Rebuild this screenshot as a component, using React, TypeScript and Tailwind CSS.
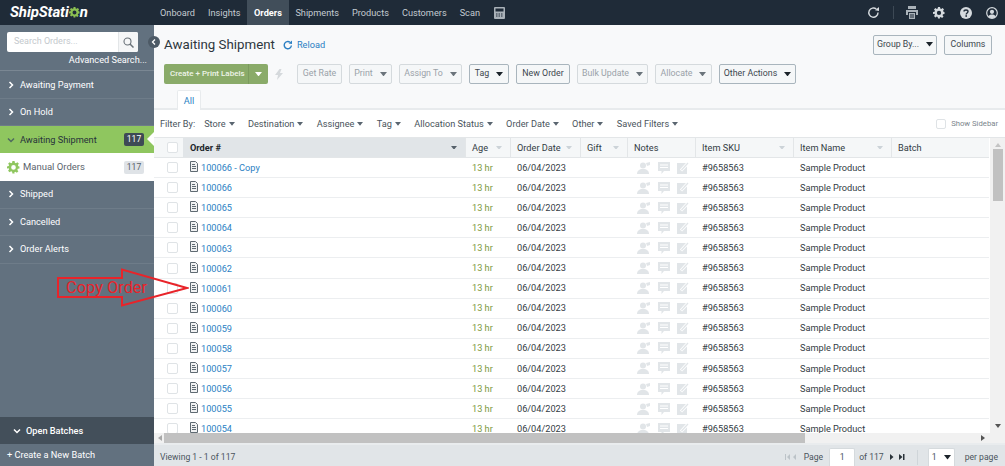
import React from "react";

const Caret = ({ c = "#5a6570", s = 8 }: { c?: string; s?: number }) => (
  <svg width={s} height={s * 0.625} viewBox="0 0 8 5" className="inline-block shrink-0"><path d="M0 0h8L4 5z" fill={c} /></svg>
);

const Chevron = ({ down, c = "#fff" }: { down?: boolean; c?: string }) => (
  <svg width="8" height="8" viewBox="0 0 8 8" className="shrink-0">
    <path d={down ? "M1 2.5l3 3 3-3" : "M2.5 1l3 3-3 3"} fill="none" stroke={c} strokeWidth="1.5" />
  </svg>
);

const Gear = ({ size, c }: { size: number; c: string }) => (
  <svg width={size} height={size} viewBox="0 0 24 24" className="shrink-0">
    <path fill={c} fillRule="evenodd" d="M10 1h4l.6 3.2 1.9.8 2.7-1.9 2.8 2.8-1.9 2.7.8 1.9L23 11v4l-3.1.5-.8 1.9 1.9 2.7-2.8 2.8-2.7-1.9-1.9.8L14 24h-4l-.6-3.2-1.9-.8-2.7 1.9-2.8-2.8 1.9-2.7-.8-1.9L0 15v-4l3.1-.6.8-1.9L2 5.9l2.8-2.8 2.7 1.9 1.9-.8zM12 8.5a4.3 4.3 0 100 8.6 4.3 4.3 0 000-8.6z" transform="translate(0 -1)" />
  </svg>
);

const DocIcon = () => (
  <svg width="8" height="11" viewBox="0 0 8 11" className="mt-[-2px] shrink-0">
    <path d="M.5.5h5l2 2v8h-7z" fill="#f1f2f3" stroke="#5f6a72" />
    <path d="M2 3.5h3M2 5.5h4M2 7.5h4" stroke="#5f6a72" />
  </svg>
);

const NoteIcons = () => (
  <div className="flex items-center gap-[7px] pl-[10px]">
    <svg width="14" height="12" viewBox="0 0 14 12">
      <circle cx="6" cy="3.5" r="3" fill="#e1e5e8" />
      <path d="M0 12c0-3 2-5 6-5s6 2 6 5z" fill="#e1e5e8" />
      <path d="M9 1l4-1v3l-3 1z" fill="#e1e5e8" />
    </svg>
    <svg width="12" height="12" viewBox="0 0 12 12">
      <path d="M0 0h12v9H6l-2.5 3V9H0z" fill="#e1e5e8" />
      <path d="M2 3h8M2 5.5h8" stroke="#fff" />
    </svg>
    <svg width="12" height="12" viewBox="0 0 12 12">
      <rect x="0" y="1" width="10" height="11" fill="#e1e5e8" />
      <path d="M4 8.5L11 1" stroke="#fff" strokeWidth="3" />
      <path d="M4.5 8L11 1" stroke="#e1e5e8" strokeWidth="1.3" />
    </svg>
  </div>
);

const Box = ({ size = 11 }: { size?: number }) => (
  <span className="block rounded-[2px] border border-[#dfe3e6] bg-white" style={{ width: size, height: size }} />
);

const Btn = ({ label, active, caret, w }: { label: string; active?: boolean; caret?: boolean; w: string }) => (
  <div
    className={`flex h-[20px] items-center justify-center gap-[7px] whitespace-nowrap rounded-[2px] border text-[8.8px] ${w} ${
      active ? "border-[#a9b5bd] bg-[#f5f7f8] text-[#3c464e]" : "border-[#d5dadd] bg-[#f5f7f8] text-[#9aa2a8]"
    }`}
  >
    <span>{label}</span>
    {caret && <Caret c={active ? "#1b232a" : "#6b747b"} s={7} />}
  </div>
);

const SideItem = ({ label, h = "h-[27.5px]" }: { label: string; h?: string }) => (
  <div className={`flex ${h} items-center gap-[5px] border-b border-[#6e7c89] pl-[7px] text-[9.2px] text-white`}>
    <Chevron />
    <span>{label}</span>
  </div>
);

const cols = "grid-cols-[29px_282px_45px_70px_47px_68px_98px_98px_98px]";

const orders = [
  "100066 - Copy", "100066", "100065", "100064", "100063", "100062", "100061", "100060",
  "100059", "100058", "100057", "100056", "100055", "100054",
];

const headers: [string, boolean][] = [
  ["Age", true], ["Order Date", true], ["Gift", true], ["Notes", false],
  ["Item SKU", true], ["Item Name", true], ["Batch", false],
];

const filters = ["Store", "Destination", "Assignee", "Tag", "Allocation Status", "Order Date", "Other", "Saved Filters"];

export default function App() {
  return (
    <div className="relative flex h-[466px] w-[1005px] flex-col overflow-hidden bg-white font-['Roboto',sans-serif] text-[#333c44]">
      {/* top bar */}
      <header className="flex h-[25px] shrink-0 items-center bg-[#1f2b38] text-[9.2px] text-[#c3cad0]">
        <div className="flex w-[153.5px] items-center pl-[10px] text-[15px] font-bold italic leading-none tracking-[-0.1px] text-white">
          <span>ShipStati</span>
          <Gear size={11} c="#8cc152" />
          <span>n</span>
        </div>
        <nav className="flex h-full items-center">
          <span className="px-[6.5px]">Onboard</span>
          <span className="px-[6.5px]">Insights</span>
          <span className="flex h-full items-center bg-[#414e5a] px-[7px] font-bold text-white">Orders</span>
          <span className="px-[6.5px]">Shipments</span>
          <span className="px-[6.5px]">Products</span>
          <span className="px-[6.5px]">Customers</span>
          <span className="px-[6.5px]">Scan</span>
          <svg width="11" height="12" viewBox="0 0 11 12" className="ml-[7px]">
            <rect width="11" height="12" rx="1" fill="#aab2b9" />
            <rect x="1.5" y="1.5" width="8" height="3" fill="#1f2b38" />
            <path d="M2 7h7M2 9h7" stroke="#1f2b38" strokeDasharray="1.5 1" />
          </svg>
        </nav>
        <div className="ml-auto flex items-center pr-[7px]">
          <svg width="13" height="13" viewBox="0 0 13 13" className="mr-[13px]">
            <path d="M11 6.5A4.6 4.6 0 1 1 9.3 3" fill="none" stroke="#d5dade" strokeWidth="1.4" />
            <path d="M8 4.2L12 5V1z" fill="#d5dade" />
          </svg>
          <span className="mr-[12px] h-[13px] w-px bg-[#3d4955]" />
          <svg width="12" height="13" viewBox="0 0 12 13" className="mr-[15px]">
            <path d="M2 0h8v3H2zM0 4h12v5h-2V6H2v3H0z" fill="#aab2b9" />
            <path d="M3 7h6v6H3z" fill="#aab2b9" />
            <path d="M4 9h4M4 11h4" stroke="#1f2b38" />
          </svg>
          <span className="mr-[15px]"><Gear size={12} c="#d5dade" /></span>
          <svg width="12" height="12" viewBox="0 0 12 12" className="mr-[14px]">
            <circle cx="6" cy="6" r="6" fill="#d5dade" />
            <path d="M4 4.6C4 3.5 5 3 6 3s2 .6 2 1.6C8 6 6.2 6 6.2 7.4" fill="none" stroke="#1f2b38" strokeWidth="1.4" />
            <rect x="5.4" y="8.2" width="1.6" height="1.6" fill="#1f2b38" />
          </svg>
          <svg width="12" height="12" viewBox="0 0 12 12">
            <circle cx="6" cy="6" r="5.3" fill="none" stroke="#d5dade" strokeWidth="1.2" />
            <circle cx="6" cy="4.8" r="2.1" fill="#d5dade" />
            <path d="M2.4 9.5C3 7.9 4.4 7.4 6 7.4s3 .5 3.6 2.1C8.6 10.6 7.4 11 6 11s-2.6-.4-3.6-1.5z" fill="#d5dade" />
          </svg>
        </div>
      </header>

      <div className="flex min-h-0 flex-1">
        {/* sidebar */}
        <aside className="relative flex w-[154px] shrink-0 flex-col bg-[#62717f]">
          <div className="h-[46px] border-b border-[#7a8793] pl-[7px] pr-[7px] pt-[7px]">
            <div className="flex h-[20px] w-[131px] items-center rounded-[2px] bg-white">
              <span className="flex-1 pl-[7px] text-[9px] text-[#c4c9cd]">Search Orders...</span>
              <span className="flex h-full w-[20px] items-center justify-center rounded-r-[2px] border-l border-[#e3e6e8] bg-[#f5f6f7]">
                <svg width="11" height="11" viewBox="0 0 11 11">
                  <circle cx="4.5" cy="4.5" r="3.5" fill="none" stroke="#6a7279" strokeWidth="1.1" />
                  <path d="M7 7l3.5 3.5" stroke="#6a7279" strokeWidth="1.5" />
                </svg>
              </span>
            </div>
            <div className="text-right text-[9.2px] leading-[16px] text-white">Advanced Search...</div>
          </div>
          <div className="h-[1px]" />
          <SideItem label="Awaiting Payment" h="h-[27px]" />
          <SideItem label="On Hold" h="h-[27px]" />
          <div className="relative flex h-[27px] items-center bg-[#8fc65f] pl-[7px] text-[9.2px] text-[#27323b]">
            <Chevron down c="#4f6a5f" />
            <span className="ml-[5px]">Awaiting Shipment</span>
            <span className="ml-auto mr-[10px] flex h-[13px] w-[20px] items-center justify-center rounded-[2px] bg-[#3e4a55] text-[8.5px] text-white">117</span>
            <span className="absolute right-0 top-[6px] h-0 w-0 border-y-[7px] border-r-[7px] border-y-transparent border-r-white" />
          </div>
          <div className="flex h-[28px] items-center bg-white pl-[7px] text-[9.5px] text-[#5a646c]">
            <Gear size={13} c="#8fc65f" />
            <span className="ml-[3px]">Manual Orders</span>
            <span className="ml-auto mr-[10px] flex h-[13px] w-[20px] items-center justify-center rounded-[2px] bg-[#dfe3e7] text-[8.5px] text-[#56616a]">117</span>
          </div>
          <SideItem label="Shipped" />
          <SideItem label="Cancelled" />
          <SideItem label="Order Alerts" />
          <div className="flex-1" />
          <div className="flex h-[27px] items-center bg-[#434f5a] pl-[13px] text-[9.2px] font-medium text-white">
            <Chevron down />
            <span className="ml-[5px]">Open Batches</span>
          </div>
          <div className="flex h-[22px] items-center pl-[7px] text-[9.2px] text-white">+ Create a New Batch</div>
          <span className="absolute right-[-6px] top-[11px] z-10 flex h-[12px] w-[12px] items-center justify-center rounded-full bg-[#4d5a66]">
            <svg width="6" height="6" viewBox="0 0 6 6"><path d="M4 .5L1.5 3 4 5.5" fill="none" stroke="#fff" strokeWidth="1.3" /></svg>
          </span>
        </aside>

        {/* main */}
        <main className="flex min-w-0 flex-1 flex-col">
          <section className="h-[85px] shrink-0 border-b-[2px] border-[#e8ebed] bg-[#f8f9fa] pl-[10px]">
            <div className="flex h-[39px] items-center">
              <h1 className="mt-[1px] text-[13.3px] leading-none text-[#2d363d]">Awaiting Shipment</h1>
              <svg width="10" height="10" viewBox="0 0 10 10" className="ml-[8px] mt-[1px]">
                <path d="M8.4 5.5A3.6 3.6 0 1 1 7 2.3" fill="none" stroke="#2b7fc3" strokeWidth="1.4" />
                <path d="M5.6 3.4L9 4V.6z" fill="#2b7fc3" />
              </svg>
              <span className="ml-[4px] text-[9.2px] text-[#2b7fc3]">Reload</span>
              <div className="ml-auto mr-[13px] flex gap-[7px]">
                <Btn label="Group By..." active caret w="w-[64px]" />
                <Btn label="Columns" active w="w-[48px]" />
              </div>
            </div>
            <div className="flex items-center">
              <div className="flex h-[20px] w-[104px] items-center whitespace-nowrap rounded-[2px] bg-[#8aab69] text-[8px] font-medium text-[#eef4e8]">
                <span className="w-[85px] border-r border-[#7c9b5e] pl-[6px] leading-[20px]">Create + Print Labels</span>
                <span className="flex flex-1 justify-center"><Caret c="#fff" s={7} /></span>
              </div>
              <svg width="8" height="11" viewBox="0 0 8 11" className="ml-[7px] mr-[14px]"><path d="M4.5 0L0 6h3l-1 5 6-7H5l1.5-4z" fill="#d5d9dc" /></svg>
              <div className="flex gap-[7px]">
                <Btn label="Get Rate" w="w-[45px]" />
                <Btn label="Print" caret w="w-[43px]" />
                <Btn label="Assign To" caret w="w-[63px]" />
                <Btn label="Tag" active caret w="w-[40px]" />
                <Btn label="New Order" active w="w-[54px]" />
                <Btn label="Bulk Update" caret w="w-[71px]" />
                <Btn label="Allocate" caret w="w-[57px]" />
                <Btn label="Other Actions" active caret w="w-[77px]" />
              </div>
            </div>
          </section>
          <div className="relative h-0">
            <span className="absolute left-[23px] top-[-20px] flex h-[20px] w-[24px] items-center justify-center rounded-t-[2px] border border-b-0 border-[#e8ebed] bg-white text-[9.2px] text-[#2b7fc3]">All</span>
          </div>

          {/* filters */}
          <div className="flex h-[27px] shrink-0 items-center pl-[6px] pt-[1px] text-[9.2px] text-[#4a545c]">
            <span className="mr-[9px]">Filter By:</span>
            <div className="flex gap-[13.3px]">
              {filters.map((f) => (
                <span key={f} className="flex items-center gap-[3px]">
                  {f}
                  <Caret s={6} />
                </span>
              ))}
            </div>
            <div className="ml-auto mr-[7px] flex items-center gap-[5px] text-[7.7px] text-[#7b858c]">
              <Box size={10} />
              <span>Show Sidebar</span>
            </div>
          </div>

          {/* table */}
          <div className="relative min-h-0 flex-1 overflow-hidden border-t border-[#e3e6e8]">
            <div className={`grid h-[20px] w-[835px] ${cols} items-stretch border-b border-[#e3e6e8] bg-[#f5f7f8] text-[9.2px] text-[#333c44]`}>
              <div className="flex items-center pl-[13px]"><Box /></div>
              <div className="flex items-center justify-between bg-[#e1e5e8] pl-[7px] pr-[8px] font-bold text-[#1d252b]">
                <span>Order #</span>
                <Caret s={6} c="#56616a" />
              </div>
              {headers.map(([h, sort]) => (
                <div key={h} className="flex items-center justify-between border-l border-[#e3e6e8] pl-[6px] pr-[8px]">
                  <span>{h}</span>
                  {sort && <Caret s={6} c="#ccd3d8" />}
                </div>
              ))}
            </div>
            {orders.map((o) => (
              <div key={o} className={`grid h-[20.1px] w-[835px] ${cols} items-center border-b border-[#eceef0] text-[9.2px] text-[#333c44]`}>
                <div className="pl-[13px]"><Box /></div>
                <div className="flex items-center gap-[3px] pl-[7px] text-[#2b7fc3]"><DocIcon /><span className="mt-[1px]">{o}</span></div>
                <div className="pl-[7px] text-[#7d9a3e]">13 hr</div>
                <div className="pl-[7px]">06/04/2023</div>
                <div />
                <NoteIcons />
                <div className="pl-[7px]">#9658563</div>
                <div className="pl-[7px]">Sample Product</div>
                <div />
              </div>
            ))}
            {/* vertical scrollbar */}
            <div className="absolute bottom-[10px] right-0 top-0 flex w-[15px] flex-col items-center bg-[#f1f1f1]">
              <svg width="6" height="4" viewBox="0 0 6 4" className="mt-[5px]"><path d="M0 4h6L3 0z" fill="#c4c4c4" /></svg>
              <div className="mt-[2px] h-[52px] w-[10px] bg-[#c1c1c1]" />
              <div className="flex-1" />
              <svg width="6" height="4" viewBox="0 0 6 4" className="mb-[5px]"><path d="M0 0h6L3 4z" fill="#555" /></svg>
            </div>
            {/* horizontal scrollbar */}
            <div className="absolute bottom-0 left-0 right-0 flex h-[10px] items-center bg-[#f1f1f1]">
              <svg width="4" height="6" viewBox="0 0 4 6" className="ml-[4px] mr-[2px]"><path d="M4 0v6L0 3z" fill="#a8a8a8" /></svg>
              <div className="h-full w-[641px] bg-[#c1c1c1]" />
              <svg width="4" height="6" viewBox="0 0 4 6" className="ml-auto mr-[20px]"><path d="M0 0v6l4-3z" fill="#555" /></svg>
            </div>
          </div>

          {/* footer */}
          <footer className="flex h-[23px] shrink-0 items-center border-t-[2px] border-[#e9ecee] bg-[#e1e5e8] pl-[6px] pr-[7px] pt-[3px] text-[8.6px] text-[#4a545c]">
            <span>Viewing 1 - 1 of 117</span>
            <div className="ml-auto flex items-center">
              <svg width="14" height="6" viewBox="0 0 14 6" className="mr-[5px]">
                <path d="M0 0h1v6H0zM5 0v6L2 3zM11 0v6L8 3z" fill="#bcc3c8" />
              </svg>
              <span>Page</span>
              <span className="ml-[6px] flex h-[18px] w-[26px] items-center justify-center rounded-t-[2px] border border-b-0 border-[#d5dadd] bg-white">1</span>
              <span className="ml-[4px]">of 117</span>
              <svg width="15" height="6" viewBox="0 0 15 6" className="ml-[6px]">
                <path d="M0 0l3.5 3L0 6zM9 0l3.5 3L9 6zM13 0h1.5v6H13z" fill="#2a333a" />
              </svg>
              <span className="ml-[12px] mr-[10px] h-[15px] w-px bg-[#cfd5d9]" />
              <span className="flex h-[18px] w-[27px] items-center justify-center gap-[7px] rounded-t-[2px] border border-b-0 border-[#d5dadd] bg-white">
                1 <Caret c="#1b232a" s={7} />
              </span>
              <span className="ml-[10px]">per page</span>
            </div>
          </footer>
        </main>
      </div>

      {/* annotation arrow */}
      <div className="absolute left-[57px] top-[268px] h-[39px] w-[132px]">
        <svg width="132" height="39" viewBox="0 0 132 39" className="absolute inset-0">
          <path d="M1 10h64V1.5L130 20 65 37.5V29H1z" fill="none" stroke="#e8242a" strokeWidth="2" />
        </svg>
        <span className="absolute left-[9px] top-[9px] text-[16.4px] leading-[21px] text-[#e8242a]">Copy Order</span>
      </div>
    </div>
  );
}
